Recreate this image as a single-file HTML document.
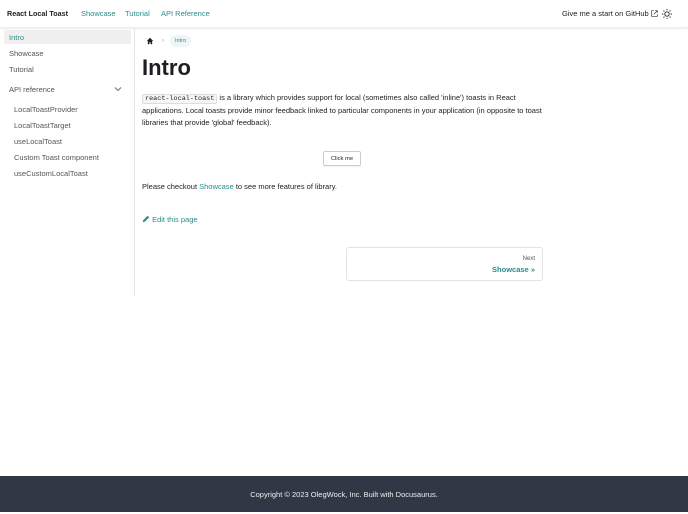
<!DOCTYPE html>
<html><head><meta charset="utf-8"><style>
*{box-sizing:border-box;margin:0;padding:0}
body{width:688px;height:512px;overflow:hidden;font-family:"Liberation Sans",sans-serif;color:#1c1e21;background:#fff;position:relative;font-size:7.5px}
a{color:#2a8c8c;text-decoration:none}
.nav{position:absolute;left:0;top:0;width:688px;height:28px;border-bottom:1px solid #eee;box-shadow:0 1px 2px rgba(0,0,0,.08)}
.nav span{position:absolute;top:9px;font-size:7.5px}
.side{position:absolute;left:0;top:28px;width:135px;height:268px;border-right:1px solid #e5e5e5}
.side div{position:absolute;font-size:7.5px;color:#555}
.main{position:absolute;left:142px}
.foot{position:absolute;left:0;top:476px;width:688px;height:36px;background:#303846;color:#eee;font-size:7.5px;text-align:center;line-height:38px}
</style></head><body>
<div class="nav">
<span style="left:7px;font-weight:bold;color:#1c1e21;font-size:7.2px">React Local Toast</span>
<span style="left:81px"><a>Showcase</a></span>
<span style="left:125px"><a>Tutorial</a></span>
<span style="left:161px"><a>API Reference</a></span>
<span style="left:562px;color:#1c1e21">Give me a start on GitHub <svg width="7" height="7" viewBox="0 0 10 10" style="vertical-align:-1px"><path d="M4 1H1v8h8V6M6 1h3v3M9 1L4 6" fill="none" stroke="#333" stroke-width="1"/></svg></span>
<svg style="position:absolute;left:662px;top:9px" width="10" height="10" viewBox="0 0 10 10"><circle cx="5" cy="5" r="2.2" fill="none" stroke="#222" stroke-width=".9"/><path d="M5 0v1.3M5 8.7V10M0 5h1.3M8.7 5H10M1.5 1.5l.9.9M7.6 7.6l.9.9M1.5 8.5l.9-.9M7.6 2.4l.9-.9" stroke="#222" stroke-width=".9"/></svg>
</div>
<div class="side">
<div style="left:4px;top:2px;width:127px;height:14px;background:#f0f0f0;border-radius:2px;color:#2a8c8c;padding:3px 5px">Intro</div>
<div style="left:9px;top:21px">Showcase</div>
<div style="left:9px;top:37px">Tutorial</div>
<div style="left:9px;top:57px">API reference</div>
<svg style="position:absolute;left:114px;top:58px" width="8" height="6" viewBox="0 0 8 6"><path d="M1 1.5l3 3 3-3" fill="none" stroke="#666" stroke-width=".9"/></svg>
<div style="left:14px;top:77px">LocalToastProvider</div>
<div style="left:14px;top:93px">LocalToastTarget</div>
<div style="left:14px;top:109px">useLocalToast</div>
<div style="left:14px;top:125px">Custom Toast component</div>
<div style="left:14px;top:141px">useCustomLocalToast</div>
</div>
<div class="main" style="top:35px">
<svg style="position:absolute;left:4px;top:2px" width="8" height="8" viewBox="0 0 10 10"><path d="M5 1L1 5h1.3v4h2V6.5h1.4V9h2V5H9z" fill="#222"/></svg>
<span style="position:absolute;left:20px;top:3px;color:#999;font-size:6px">›</span>
<span style="position:absolute;left:28px;top:0;background:#eef5f5;color:#2a8c8c;font-size:5.5px;padding:3px 5px;border-radius:7px">Intro</span>
</div>
<div class="main" style="top:56px;font-size:22px;font-weight:bold;line-height:24px">Intro</div>
<div class="main" style="top:92px;width:400px;line-height:12px;color:#1c1e21">
<code style="font-family:'Liberation Mono',monospace;font-size:6.8px;background:#f6f6f6;border:1px solid #ddd;border-radius:2px;padding:0 2px">react-local-toast</code> is a library which provides support for local (sometimes also called 'inline') toasts in React applications. Local toasts provide minor feedback linked to particular components in your application (in opposite to toast libraries that provide 'global' feedback).
</div>
<div style="position:absolute;left:323px;top:151px;width:38px;height:15px;border:1px solid #ccc;border-radius:2px;font-size:5.8px;display:flex;align-items:center;justify-content:center;box-shadow:0 1px 1px rgba(0,0,0,.05)">Click me</div>
<div class="main" style="top:182px">Please checkout <a>Showcase</a> to see more features of library.</div>
<div class="main" style="top:215px"><a><svg width="8" height="8" viewBox="0 0 10 10" style="vertical-align:-1px"><path d="M1 9l.5-2.5L7 1l2 2-5.5 5.5z" fill="#2a8c8c"/></svg> Edit this page</a></div>
<div style="position:absolute;left:346px;top:247px;width:197px;height:34px;border:1px solid #e3e3e3;border-radius:3px;text-align:right;padding:8px 7px">
<div style="font-size:6px;color:#555">Next</div>
<div style="font-size:7.5px;font-weight:bold;color:#2a8c8c;margin-top:3px">Showcase »</div>
</div>
<div class="foot">Copyright © 2023 OlegWock, Inc. Built with Docusaurus.</div>
</body></html>
